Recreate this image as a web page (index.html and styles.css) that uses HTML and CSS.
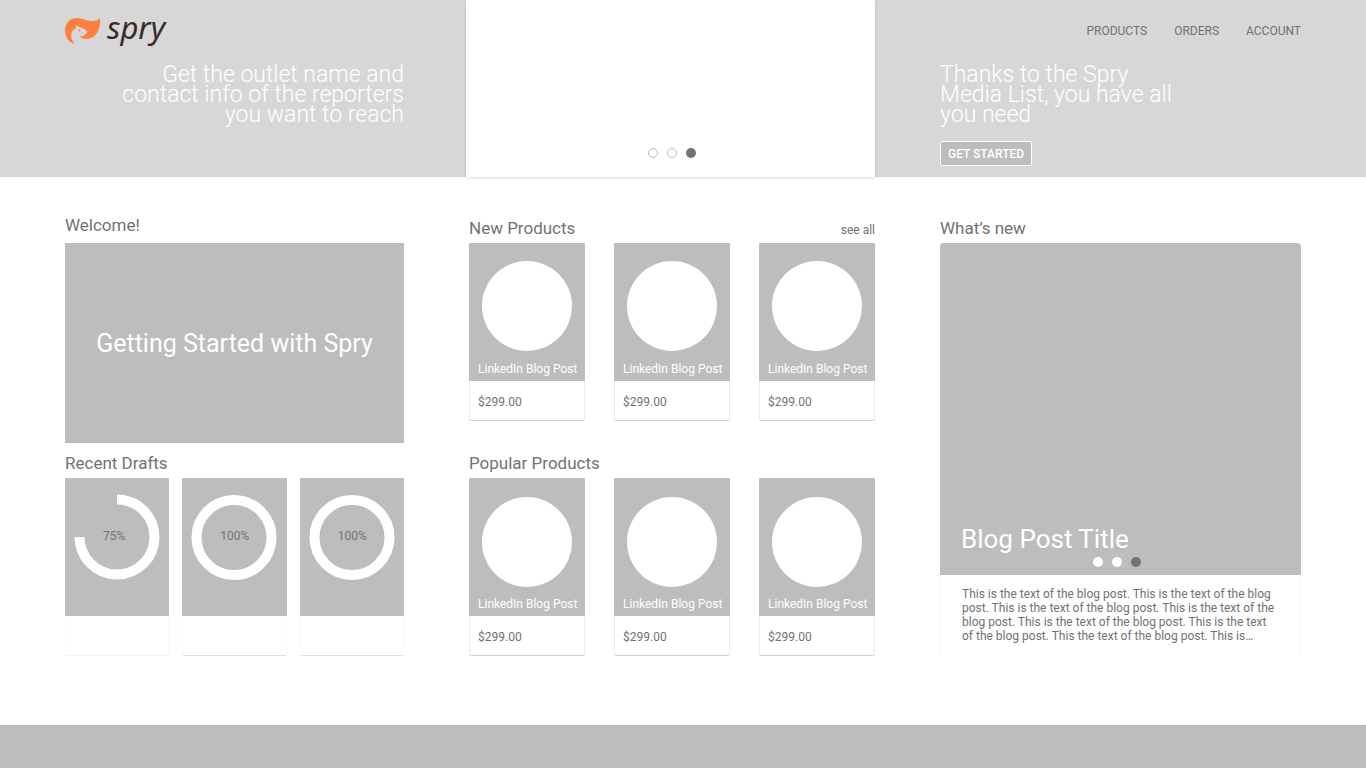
FILE: index.html
```html
<!DOCTYPE html>
<html lang="en">
<head>
    <meta charset="utf-8">
    <title>Spry</title>
    <link rel="stylesheet" href="styles.css">
</head>
<body>
    <header class="hero">
        <div class="hero-left">
            <a class="logo" href="#">
                <svg class="logo-mark" viewBox="0 0 36 28" width="36" height="28" aria-hidden="true">
                    <path fill="#ff7f3f" d="M9.500 27C3 25 0 19.500 0 13.500C0 6 5 1 12 1C19 1 22.500 5 29 4C31.500 3.700 33.500 2.500 35 1.300C35.500 8 34 14.500 30 18.500C26 22.500 18.500 23 14 19.500C18 20 21.500 17.500 22 14.500C20.500 12 18 10.800 15 10.500L11.500 8.500L10.500 11.500C5.500 13.500 4.500 20.500 9.500 27Z"/>
                    <circle cx="14.500" cy="13.500" r="1" fill="#ff7f3f"/>
                </svg>
                <span class="logo-text">spry</span>
            </a>
            <p class="hero-text">Get the outlet name and contact info of the reporters you want to reach</p>
        </div>
        <div class="slide">
            <div class="dots">
                <button class="dot outline" aria-label="Slide 1"></button>
                <button class="dot outline" aria-label="Slide 2"></button>
                <button class="dot active" aria-label="Slide 3"></button>
            </div>
        </div>
        <div class="hero-right">
            <nav class="nav">
                <a href="#">PRODUCTS</a>
                <a href="#">ORDERS</a>
                <a href="#">ACCOUNT</a>
            </nav>
            <p class="hero-text">Thanks to the Spry Media List, you have all you need</p>
            <button class="btn">GET STARTED</button>
        </div>
    </header>

    <main class="content">
        <div class="column">
            <section>
                <div class="section-head welcome">
                    <h2>Welcome!</h2>
                </div>
                <a class="getting-started" href="#">Getting Started with Spry</a>
            </section>
            <section>
                <div class="section-head drafts-head">
                    <h2>Recent Drafts</h2>
                </div>
                <div class="cards drafts">
                    <div class="card">
                        <div class="card-top">
                            <svg class="ring" viewBox="0 0 86 86" width="86" height="86" aria-hidden="true">
                                <path d="M43 5.500A37.500 37.500 0 1 1 5.500 43" fill="none" stroke="#fff" stroke-width="10"/>
                            </svg>
                            <span class="percent">75%</span>
                        </div>
                        <div class="card-body"></div>
                    </div>
                    <div class="card">
                        <div class="card-top">
                            <svg class="ring" viewBox="0 0 86 86" width="86" height="86" aria-hidden="true">
                                <circle cx="43" cy="43.500" r="37.500" fill="none" stroke="#fff" stroke-width="10"/>
                            </svg>
                            <span class="percent">100%</span>
                        </div>
                        <div class="card-body"></div>
                    </div>
                    <div class="card">
                        <div class="card-top">
                            <svg class="ring" viewBox="0 0 86 86" width="86" height="86" aria-hidden="true">
                                <circle cx="43" cy="43.500" r="37.500" fill="none" stroke="#fff" stroke-width="10"/>
                            </svg>
                            <span class="percent">100%</span>
                        </div>
                        <div class="card-body"></div>
                    </div>
                </div>
            </section>
        </div>

        <div class="column">
            <section>
                <div class="section-head">
                    <h2>New Products</h2>
                    <a href="#">see all</a>
                </div>
                <div class="cards products">
                    <div class="card">
                        <div class="card-top"><div class="circle"></div><p>LinkedIn Blog Post</p></div>
                        <div class="card-body">$299.00</div>
                    </div>
                    <div class="card">
                        <div class="card-top"><div class="circle"></div><p>LinkedIn Blog Post</p></div>
                        <div class="card-body">$299.00</div>
                    </div>
                    <div class="card">
                        <div class="card-top"><div class="circle"></div><p>LinkedIn Blog Post</p></div>
                        <div class="card-body">$299.00</div>
                    </div>
                </div>
            </section>
            <section>
                <div class="section-head popular-head">
                    <h2>Popular Products</h2>
                </div>
                <div class="cards products popular">
                    <div class="card">
                        <div class="card-top"><div class="circle"></div><p>LinkedIn Blog Post</p></div>
                        <div class="card-body">$299.00</div>
                    </div>
                    <div class="card">
                        <div class="card-top"><div class="circle"></div><p>LinkedIn Blog Post</p></div>
                        <div class="card-body">$299.00</div>
                    </div>
                    <div class="card">
                        <div class="card-top"><div class="circle"></div><p>LinkedIn Blog Post</p></div>
                        <div class="card-body">$299.00</div>
                    </div>
                </div>
            </section>
        </div>

        <section class="column">
            <div class="section-head">
                <h2>What’s new</h2>
            </div>
            <article class="post">
                <div class="post-image">
                    <h3>Blog Post Title</h3>
                    <div class="dots">
                        <button class="dot" aria-label="Post 1"></button>
                        <button class="dot" aria-label="Post 2"></button>
                        <button class="dot active" aria-label="Post 3"></button>
                    </div>
                </div>
                <p class="post-text">This is the text of the blog post. This is the text of the blog post. This is the text of the blog post. This is the text of the blog post. This is the text of the blog post. This is the text of the blog post. This the text of the blog post. This is…</p>
            </article>
        </section>
    </main>

    <footer class="footer"></footer>
</body>
</html>
```
FILE: styles.css
```css
:root {
    --color-hero: #d7d7d7;
    --color-block: #bdbdbd;
    --color-text: #727272;
    --color-border: #ebebeb;
}

* {
    box-sizing: border-box;
}
body {
    margin: 0;
    min-height: 100vh;
    display: flex;
    flex-direction: column;
    background: #fff;
    color: var(--color-text);
    font-family: Roboto, "Liberation Sans", sans-serif;
    font-size: 12px;
    line-height: 14px;
}
h2, h3, p {
    margin: 0;
    font-weight: 400;
}
a {
    color: inherit;
    text-decoration: none;
}

/* both rows share the same three columns */
.hero, .content {
    display: grid;
    grid-template-columns: 339fr 406fr 361fr;
    column-gap: 65px;
    padding: 0 65px;
}
.hero {
    background: var(--color-hero);
}
.logo {
    display: flex;
    align-items: center;
    gap: 6px;
    height: 65px;
    padding-bottom: 4px;
}
.logo-text {
    font: italic 31px/40px "Noto Sans", sans-serif;
    color: #3a2a2a;
    padding-bottom: 7px;
}
.hero-text {
    color: #fff;
    font-size: 23px;
    font-weight: 300;
    line-height: 20px;
}
.hero-left .hero-text {
    padding-left: 50px;
    text-align: right;
}
.hero-right .hero-text {
    max-width: 240px;
}
.slide {
    display: flex;
    align-items: flex-end;
    justify-content: center;
    margin-left: -3px;
    padding: 0 0 19px 3px;
    background: #fff;
    box-shadow: 0 1px 3px rgba(0, 0, 0, .15);
}
.dots {
    display: flex;
    justify-content: center;
    gap: 9px;
}
.dot {
    width: 10px;
    height: 10px;
    padding: 0;
    border: 0;
    border-radius: 50%;
    background: #fff;
}
.dot.outline {
    border: 1px solid var(--color-block);
}
.dot.active {
    background: var(--color-text);
}
.nav {
    display: flex;
    justify-content: flex-end;
    align-items: center;
    gap: 27px;
    height: 65px;
    padding-bottom: 3px;
}
.btn {
    display: block;
    height: 25px;
    margin: 16px 0 11px;
    padding: 0 7px;
    border: 1px solid #fff;
    border-radius: 2px;
    background: var(--color-block);
    color: #fff;
    font: 500 12px/14px Roboto, "Liberation Sans", sans-serif;
}

.content {
    padding-top: 41px;
    padding-bottom: 69px;
}
.section-head {
    display: flex;
    justify-content: space-between;
    align-items: baseline;
    height: 25px;
}
.section-head h2 {
    font-size: 17px;
    line-height: 20px;
}
.welcome {
    height: 28px;
    margin-top: -3px;
}
.drafts-head {
    margin-top: 10px;
}
.popular-head {
    margin-top: 32px;
}
.getting-started {
    display: flex;
    align-items: center;
    justify-content: center;
    height: 200px;
    padding-top: 2px;
    background: var(--color-block);
    color: #fff;
    font-size: 25px;
    line-height: 30px;
}

.cards {
    display: grid;
    grid-template-columns: repeat(3, 1fr);
}
.drafts {
    gap: 13px;
}
.products {
    gap: 29px;
}
.card-top {
    position: relative;
    height: 138px;
    border-radius: 1px 1px 0 0;
    background: var(--color-block);
    color: #fff;
}
.card-body {
    height: 40px;
    padding: 14px 8px 0;
    border: 1px solid var(--color-border);
    border-top: 0;
    border-bottom-color: #d0d0d0;
    border-radius: 0 0 2px 2px;
}
.drafts .card-body {
    border-color: #fafafa;
    border-bottom-color: #dedede;
}
.drafts .card:first-child .card-body {
    border-bottom-color: #f4f4f4;
}
.ring {
    display: block;
    margin: 0 auto;
    padding-top: 16px;
    box-sizing: content-box;
}
.percent {
    position: absolute;
    top: 51px;
    left: 38px;
    color: var(--color-text);
}
.products .card-top {
    padding-top: 18px;
}
.circle {
    width: 90px;
    height: 90px;
    margin: 0 auto 11px;
    border-radius: 50%;
    background: #fff;
}
.popular .card-top {
    padding-top: 19px;
}
.popular .circle {
    margin-bottom: 10px;
}
.products p {
    padding-left: 9px;
    white-space: nowrap;
}

.post-image {
    display: flex;
    flex-direction: column;
    justify-content: flex-end;
    height: 332px;
    padding-bottom: 8px;
    border-radius: 4px 4px 0 0;
    background: var(--color-block);
}
.post-image h3 {
    padding: 0 21px 3px;
    color: #fff;
    font-size: 26px;
    line-height: 30px;
}
.post-image .dots {
    margin-right: 8px;
}
.post-text {
    height: 80px;
    padding: 12px 25px 0 21px;
    border: 1px solid #f8f8f8;
    border-width: 0 1px;
}

.footer {
    flex: 1;
    min-height: 43px;
    background: var(--color-block);
}
```
